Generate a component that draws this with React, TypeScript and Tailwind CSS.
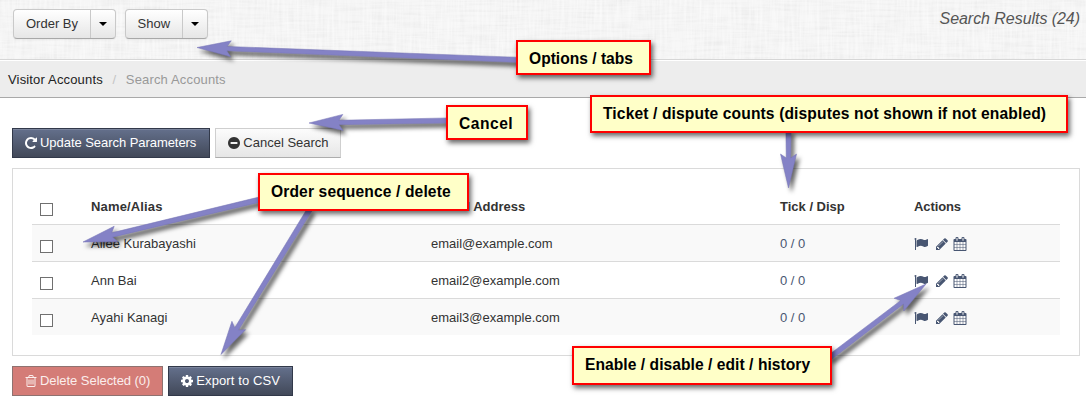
import type { ReactNode } from "react";

const ICONS = {
  repeat:
    "M1664 256v448q0 26-19 45t-45 19h-448q-42 0-59-40-17-39 14-69l138-138q-148-137-349-137-104 0-198.5 40.5t-163.5 109.5-109.5 163.5-40.5 198.5 40.5 198.5 109.5 163.5 163.5 109.5 198.5 40.5q119 0 225-52t179-147q7-10 23-12 15 0 25 9l137 138q9 8 9.5 20.5t-7.5 22.5q-109 132-264 204.5t-327 72.5q-156 0-298-61t-245-164-164-245-61-298 61-298 164-245 245-164 298-61q147 0 284.5 55.5t244.5 156.5l130-129q29-31 70-14 39 17 39 59z",
  minus:
    "M1344 960v-128q0-26-19-45t-45-19h-768q-26 0-45 19t-19 45v128q0 26 19 45t45 19h768q26 0 45-19t19-45zm320-64q0 209-103 385.5t-279.5 279.5-385.5 103-385.5-103-279.5-279.5-103-385.5 103-385.5 279.5-279.5 385.5-103 385.5 103 279.5 279.5 103 385.5z",
  trash:
    "M704 736v576q0 14-9 23t-23 9h-64q-14 0-23-9t-9-23v-576q0-14 9-23t23-9h64q14 0 23 9t9 23zm256 0v576q0 14-9 23t-23 9h-64q-14 0-23-9t-9-23v-576q0-14 9-23t23-9h64q14 0 23 9t9 23zm256 0v576q0 14-9 23t-23 9h-64q-14 0-23-9t-9-23v-576q0-14 9-23t23-9h64q14 0 23 9t9 23zm128 724v-948h-896v948q0 22 7 40.5t14.5 27 10.5 8.5h832q3 0 10.5-8.5t14.5-27 7-40.5zm-672-1076h448l-48-117q-7-9-17-11h-317q-10 2-17 11zm928 32v64q0 14-9 23t-23 9h-96v948q0 83-47 143.5t-113 60.5h-832q-66 0-113-58.5t-47-141.5v-952h-96q-14 0-23-9t-9-23v-64q0-14 9-23t23-9h309l70-167q15-37 54-63t79-26h320q40 0 79 26t54 63l70 167h309q14 0 23 9t9 23z",
  cog: "M1152 896q0-106-75-181t-181-75-181 75-75 181 75 181 181 75 181-75 75-181zm512-109v222q0 12-8 23t-20 13l-185 28q-19 54-39 91 35 50 107 138 10 12 10 25t-9 23q-27 37-99 108t-94 71q-12 0-26-9l-138-108q-44 23-91 38-16 136-29 186-7 28-36 28h-222q-14 0-24.5-8.5t-11.5-21.5l-28-184q-49-16-90-37l-141 107q-10 9-25 9-14 0-25-11-126-114-165-168-7-10-7-23 0-12 8-23 15-21 51-66.5t54-70.5q-27-50-41-99l-183-27q-13-2-21-12.5t-8-23.5v-222q0-12 8-23t19-13l186-28q14-46 39-92-40-57-107-138-10-12-10-24 0-10 9-23 26-36 98.5-107.5t94.5-71.5q13 0 26 10l138 107q44-23 91-38 16-136 29-186 7-28 36-28h222q14 0 24.5 8.5t11.5 21.5l28 184q49 16 90 37l142-107q9-9 24-9 13 0 25 10 129 119 165 170 7 8 7 22 0 12-8 23-15 21-51 66.5t-54 70.5q26 50 41 98l183 28q13 2 21 12.5t8 23.5z",
  flag: "M320 256q0 72-64 110v1266q0 13-9.5 22.5t-22.5 9.5h-64q-13 0-22.5-9.5t-9.5-22.5v-1266q-64-38-64-110 0-53 37.5-90.5t90.5-37.5 90.5 37.5 37.5 90.5zm1472 64v763q0 25-12.5 38.5t-39.5 27.5q-215 116-369 116-61 0-123.5-22t-108.5-48-115.5-48-142.5-22q-192 0-464 146-17 9-33 9-26 0-45-19t-19-45v-742q0-32 31-55 21-14 79-43 236-120 421-120 107 0 200 29t219 88q38 19 88 19 54 0 117.5-21t110-47 88-47 54.5-21q26 0 45 19t19 45z",
  pencil:
    "M491 1536l91-91-235-235-91 91v107h128v128h107zm523-928q0-22-22-22-10 0-17 7l-542 542q-7 7-7 17 0 22 22 22 10 0 17-7l542-542q7-7 7-17zm-54-192l416 416-832 832h-416v-416zm683 96q0 53-37 90l-166 166-416-416 166-165q36-38 90-38 53 0 91 38l235 234q37 39 37 91z",
  calendar:
    "M192 1664h288v-288h-288v288zm352 0h320v-288h-320v288zm-352-352h288v-320h-288v320zm352 0h320v-320h-320v320zm-352-384h288v-288h-288v288zm736 736h320v-288h-320v288zm-384-736h320v-288h-320v288zm768 736h288v-288h-288v288zm-384-352h320v-320h-320v320zm-352-864v-288q0-13-9.5-22.5t-22.5-9.5h-64q-13 0-22.5 9.5t-9.5 22.5v288q0 13 9.5 22.5t22.5 9.5h64q13 0 22.5-9.5t9.5-22.5zm736 864h288v-320h-288v320zm-384-384h320v-288h-320v288zm384 0h288v-288h-288v288zm32-480v-288q0-13-9.5-22.5t-22.5-9.5h-64q-13 0-22.5 9.5t-9.5 22.5v288q0 13 9.5 22.5t22.5 9.5h64q13 0 22.5-9.5t9.5-22.5zm384-64v1280q0 52-38 90t-90 38h-1408q-52 0-90-38t-38-90v-1280q0-52 38-90t90-38h128v-96q0-66 47-113t113-47h64q66 0 113 47t47 113v96h384v-96q0-66 47-113t113-47h64q66 0 113 47t47 113v96h128q52 0 90 38t38 90z",
};

function Icon({ name, className = "" }: { name: keyof typeof ICONS; className?: string }) {
  return (
    <svg viewBox="0 0 1792 1792" className={`size-[14px] shrink-0 fill-current ${className}`}>
      <path d={ICONS[name]} />
    </svg>
  );
}

function SplitButton({ label }: { label: string }) {
  return (
    <div className="flex h-[30px] rounded-[4px] border border-[#c9c9c9] border-b-[#a8a8a8] bg-linear-to-b from-white to-[#e6e6e6] shadow-[0_1px_2px_rgba(0,0,0,0.05)]">
      <button className="border-r border-[#c9c9c9] pr-[11.5px] pl-3 leading-[28px]">{label}</button>
      <button className="flex w-6 items-center justify-center">
        <svg viewBox="0 0 8 4" className="h-1 w-2">
          <path d="M0 0h8l-4 4z" />
        </svg>
      </button>
    </div>
  );
}

function Button({ tone, children }: { tone: "dark" | "light" | "danger"; children: ReactNode }) {
  const tones = {
    dark: "border-[#32394a] bg-linear-to-b from-[#64708c] to-[#424959] text-white shadow-[inset_0_1px_0_rgba(255,255,255,0.15)]",
    light: "border-[#cfcfcf] border-b-[#adadad] bg-linear-to-b from-[#fcfcfc] to-[#e6e6e6] text-[#333]",
    danger: "border-[#8e7270] bg-[#d47c77] text-[#fbeeed]",
  };
  return (
    <button className={`flex h-[30px] items-center border pr-3 pl-[11px] leading-[20px] ${tones[tone]}`}>{children}</button>
  );
}

function Checkbox() {
  return <input type="checkbox" className="mt-[6px] ml-2 block size-[13px] appearance-none border border-[#707070] bg-white" />;
}

const ROWS = [
  { name: "Ailee Kurabayashi", email: "email@example.com" },
  { name: "Ann Bai", email: "email2@example.com" },
  { name: "Ayahi Kanagi", email: "email3@example.com" },
];

const GRID = "grid grid-cols-[59px_340px_349px_134px_1fr] items-start";

const ARROWS = [
  { tip: [197, 47.5], tail: [520, 60] },
  { tip: [309, 123], tail: [450, 120.5] },
  { tip: [83, 242], tail: [262, 199] },
  { tip: [221, 354.5], tail: [310, 209] },
  { tip: [788.5, 188], tail: [788.5, 130] },
  { tip: [926, 284], tail: [829, 358] },
];

function Arrow({ tip, tail }: { tip: number[]; tail: number[] }) {
  const dx = tail[0] - tip[0];
  const dy = tail[1] - tip[1];
  const len = Math.hypot(dx, dy);
  const angle = (Math.atan2(dy, dx) * 180) / Math.PI;
  return (
    <path
      transform={`translate(${tip[0]} ${tip[1]}) rotate(${angle})`}
      d={`M0 0L34 -8L30 -2.2L${len} -2.6V2.6L30 2.2L34 8Z`}
    />
  );
}

function Callout({ place, children }: { place: string; children: ReactNode }) {
  return (
    <div
      className={`absolute border-2 border-[#f00] bg-[#ffffc8] pt-2 pl-[11px] text-[15.6px] leading-[18px] font-bold whitespace-nowrap text-black shadow-[2px_3px_5px_rgba(0,0,0,0.6)] ${place}`}
    >
      {children}
    </div>
  );
}

export default function App() {
  return (
    <div className="relative h-[409px] w-[1086px] overflow-hidden bg-white font-['Liberation_Sans',Arial,sans-serif] text-[13px] text-[#333]">
      <header className="relative h-[60px] border-b border-[#d6d6d6] bg-[#f4f4f4]">
        <svg className="absolute inset-0 h-full w-full">
          <filter id="weft" x="0" y="0" width="100%" height="100%" colorInterpolationFilters="sRGB">
            <feTurbulence type="fractalNoise" baseFrequency="0.03 0.4" numOctaves="2" seed="4" />
            <feColorMatrix values="0 0 0 0 0.5  0 0 0 0 0.5  0 0 0 0 0.5  0.16 0 0 0 -0.065" />
          </filter>
          <filter id="warp" x="0" y="0" width="100%" height="100%" colorInterpolationFilters="sRGB">
            <feTurbulence type="fractalNoise" baseFrequency="0.4 0.03" numOctaves="2" seed="9" />
            <feColorMatrix values="0 0 0 0 1  0 0 0 0 1  0 0 0 0 1  1 0 0 0 -0.3" />
          </filter>
          <rect width="100%" height="100%" filter="url(#weft)" />
          <rect width="100%" height="100%" filter="url(#warp)" />
        </svg>
        <div className="relative flex justify-between pt-[9px] pr-[6px] pl-[13px]">
          <div className="flex gap-[9px]">
            <SplitButton label="Order By" />
            <SplitButton label="Show" />
          </div>
          <h1 className="text-[16px] leading-[20px] tracking-[-0.05px] text-[#555] italic">Search Results (24)</h1>
        </div>
      </header>
      <nav className="flex h-[38px] items-center border-t border-b border-t-white border-b-[#a9a9a9] bg-[#ededed] pt-px pl-2 tracking-[0.16px]">
        <span className="text-[#222]">Visitor Accounts</span>
        <span className="w-[23px] text-center text-[#c4c4c4]">/</span>
        <span className="text-[#999]">Search Accounts</span>
      </nav>
      <main className="px-3 pt-[30px] pr-[6px]">
        <div className="flex gap-[5px]">
          <Button tone="dark">
            <Icon name="repeat" className="mr-[2px]" />
            <span className="pr-px tracking-[-0.05px]">Update Search Parameters</span>
          </Button>
          <Button tone="light">
            <Icon name="minus" className="mr-[2px]" />
            <span className="-mr-px">Cancel Search</span>
          </Button>
        </div>
        <section className="mt-[10px] h-[188px] border border-[#dadada] px-[19px] pt-[18px]">
          <div className={`h-[37px] pt-[10px] leading-[20px] font-bold ${GRID}`}>
            <Checkbox />
            <span className="tracking-[0.15px]">Name/Alias</span>
            <span>E-mail Address</span>
            <span>Tick / Disp</span>
            <span className="tracking-[-0.1px]">Actions</span>
          </div>
          {ROWS.map((row) => (
            <div key={row.email} className={`h-[37px] border-t border-[#dadada] pt-[9px] leading-[20px] odd:bg-white even:bg-[#f9f9f9] ${GRID}`}>
              <Checkbox />
              <span>{row.name}</span>
              <span>{row.email}</span>
              <span className="text-[#485672]">0 / 0</span>
              <span className="flex h-5 items-center text-[#485672]">
                <Icon name="flag" />
                <Icon name="pencil" className="ml-[7px]" />
                <Icon name="calendar" className="ml-1" />
              </span>
            </div>
          ))}
        </section>
        <div className="mt-[10px] flex gap-[5px]">
          <Button tone="danger">
            <Icon name="trash" className="mr-[2px]" />
            <span className="tracking-[-0.05px]">Delete Selected (0)</span>
          </Button>
          <Button tone="dark">
            <Icon name="cog" className="mr-[2px]" />
            <span className="tracking-[0.1px]">Export to CSV</span>
          </Button>
        </div>
      </main>
      <svg className="pointer-events-none absolute inset-0 h-full w-full fill-[#8482c6] stroke-[#7775b5] stroke-[0.5] drop-shadow-[3px_4px_2px_rgba(0,0,0,0.6)]">
        {ARROWS.map((arrow) => (
          <Arrow key={arrow.tip.join()} {...arrow} />
        ))}
      </svg>
      <Callout place="left-[516px] top-[40px] h-[35px] w-[135px]">Options / tabs</Callout>
      <Callout place="left-[446px] top-[105px] h-[35px] w-[82px] tracking-[0.5px]">Cancel</Callout>
      <Callout place="left-[590px] top-[95px] h-[38px] w-[478px] tracking-[0.13px]">Ticket / dispute counts (disputes not shown if not enabled)</Callout>
      <Callout place="left-[258px] top-[173px] h-[38px] w-[211px] tracking-[0.13px]">Order sequence / delete</Callout>
      <Callout place="left-[572px] top-[346px] h-[39px] w-[260px] tracking-[0.05px]">Enable / disable / edit / history</Callout>
    </div>
  );
}
